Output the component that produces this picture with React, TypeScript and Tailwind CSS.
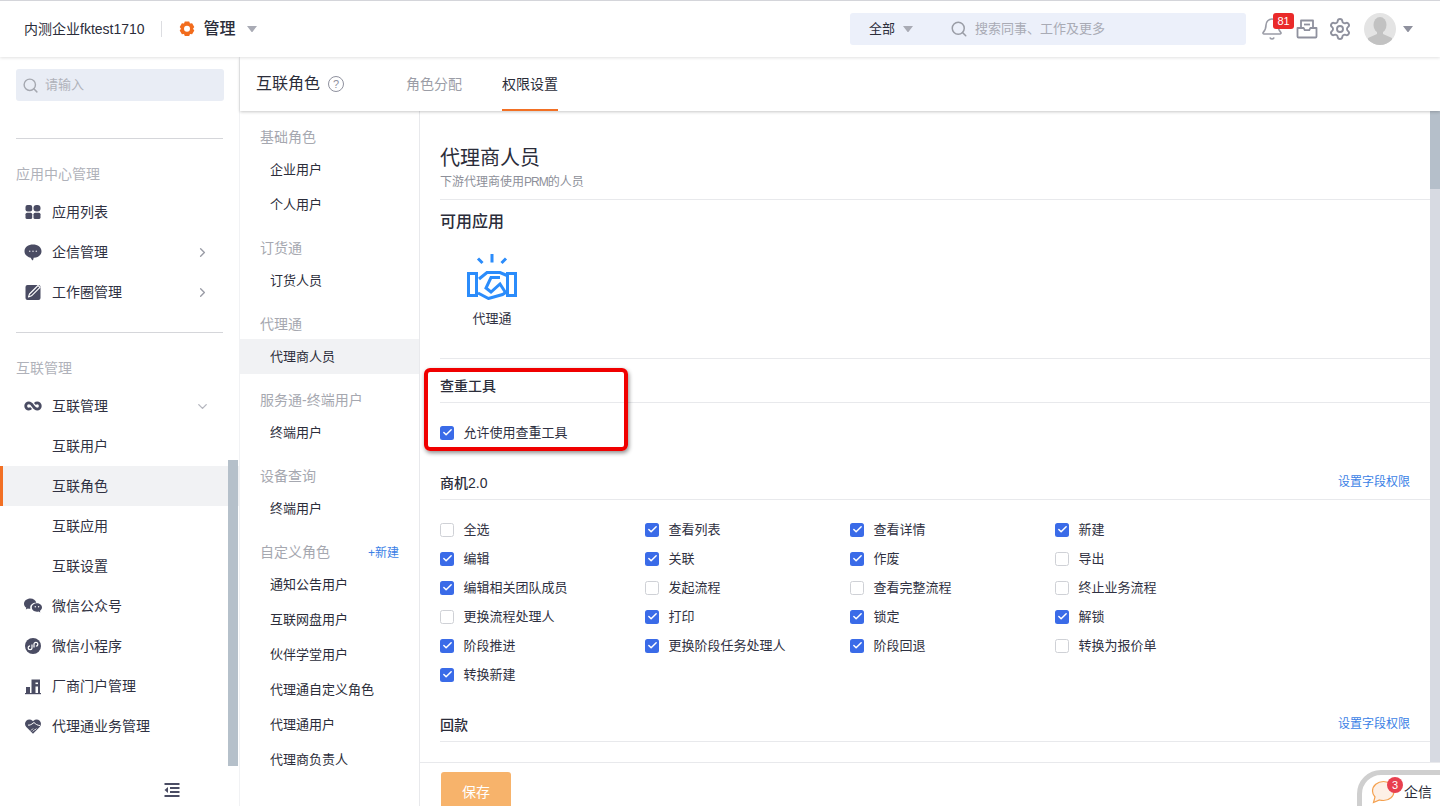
import React from "react";
import { Bell, Settings, Search, ChevronRight, ChevronDown, Check } from "lucide-react";

const Caret = ({ cls = "" }: { cls?: string }) => (
  <svg width="10" height="6" viewBox="0 0 10 6" className={cls}>
    <path d="M0 0h10L5.800 5.400a1 1 0 0 1-1.600 0z" fill="currentColor" />
  </svg>
);

const AppsIcon = () => (
  <svg width="18" height="18" viewBox="0 0 18 18" fill="#4a4c63">
    <rect x="1.500" y="2" width="6.700" height="6.500" rx="2" />
    <rect x="9.500" y="2" width="7" height="6.500" rx="3" />
    <rect x="1.500" y="9.700" width="6.700" height="6.300" rx="1.600" />
    <rect x="9.500" y="9.700" width="7" height="6.300" rx="1.600" />
  </svg>
);
const ChatIcon = () => (
  <svg width="18" height="18" viewBox="0 0 18 18">
    <path d="M9 1.500C4.400 1.500.5 4 .5 8.200c0 3.300 2.500 5.800 6.200 6.500l1.300 2.300c.4.400.9.300 1.100-.1l.6-2.100c4.600-.2 7.800-3 7.800-6.600C17.500 4 13.600 1.500 9 1.500z" fill="#4a4c63" />
    <circle cx="5.700" cy="8.300" r=".8" fill="#d8d9df" />
    <circle cx="9" cy="8.300" r=".8" fill="#d8d9df" />
    <circle cx="12.300" cy="8.300" r=".8" fill="#d8d9df" />
  </svg>
);
const EditIcon = () => (
  <svg width="18" height="18" viewBox="0 0 18 18">
    <rect x="1.500" y="2" width="15" height="15" rx="2" fill="#4a4c63" />
    <path d="M4.500 14l1-3L14 2.500l2 1.800-8.500 8.500z" fill="none" stroke="#fff" strokeWidth="1.100" strokeLinejoin="round" />
  </svg>
);
const LinkIcon = () => (
  <svg width="18" height="18" viewBox="0 0 18 18" fill="none" stroke="#4a4c63" strokeWidth="2.800">
    <path d="M9 9C7.800 7.200 6.500 5.900 4.800 5.900a3.100 3.100 0 0 0 0 6.200c1 0 1.700-.4 2.300-1M9 9c1.200 1.800 2.500 3.100 4.200 3.100a3.100 3.100 0 0 0 0-6.200c-1 0-1.700.4-2.300 1" />
  </svg>
);
const WechatIcon = () => (
  <svg width="20" height="18" viewBox="0 0 20 18">
    <path d="M7.500 1.500C3.800 1.500 1 3.800 1 6.700c0 1.600.9 3 2.300 4L2.800 12.500l2.100-1.100c.7.200 1.300.3 2 .3h.5c-.1-.4-.2-.8-.2-1.200 0-2.600 2.500-4.700 5.700-4.700h.4C12.700 3.300 10.300 1.500 7.500 1.500z" fill="#4a4c63" />
    <path d="M19 10.500c0-2.400-2.400-4.200-5.100-4.200-2.900 0-5.100 1.900-5.100 4.200s2.200 4.200 5.100 4.200c.6 0 1.200-.1 1.700-.3l1.700 1-.4-1.600c1.200-.8 2.100-2 2.100-3.300z" fill="#4a4c63" />
    <circle cx="12.300" cy="9.800" r=".7" fill="#fff" />
    <circle cx="15.600" cy="9.800" r=".7" fill="#fff" />
  </svg>
);
const MiniIcon = () => (
  <svg width="18" height="18" viewBox="0 0 18 18">
    <circle cx="9" cy="9" r="8" fill="#4a4c63" />
    <path d="M8 7.500v3.300a1.900 1.900 0 1 1-1.900-1.900M10 10.500V7.200a1.900 1.900 0 1 1 1.900 1.900" fill="none" stroke="#fff" strokeWidth="1.200" />
  </svg>
);
const BuildingIcon = () => (
  <svg width="18" height="18" viewBox="0 0 18 18" fill="#4a4c63">
    <rect x="2" y="10" width="4" height="6" />
    <path d="M7.500 2.500L16 2.500V16H7.500z" />
    <rect x="11.500" y="5.500" width="2.500" height="1.600" fill="#fff" />
    <rect x="11.500" y="9.500" width="2.500" height="6.500" fill="#fff" />
    <rect x="1" y="16" width="16" height="1.200" />
  </svg>
);
const HeartIcon = () => (
  <svg width="18" height="18" viewBox="0 0 18 18">
    <path d="M9 16.800L2.300 10C.6 8.300.6 5.500 2.300 3.800s4.500-1.700 6.200 0l.5.500.5-.5c1.700-1.700 4.500-1.700 6.200 0s1.700 4.500 0 6.200z" fill="#4a4c63" />
    <path d="M10 5.500C7 8 5 8.500 4 8M10 5.500c1.500 1.500 3.500 3 6 3" fill="none" stroke="#fff" strokeWidth="1" />
    <path d="M7 13.500l2-2M8.800 14.500l2-2M10.800 13l1.500-1.500" stroke="#fff" strokeWidth=".9" />
  </svg>
);
const CollapseIcon = () => (
  <svg width="16" height="14" viewBox="0 0 16 14" fill="#4a4c63">
    <rect x="0.500" y="0" width="15" height="2" />
    <rect x="6" y="4" width="9.500" height="2" />
    <rect x="6" y="8" width="9.500" height="2" />
    <rect x="0.500" y="12" width="15" height="2" />
    <path d="M4 4v6L0.500 7z" />
  </svg>
);
const InboxIcon = () => (
  <svg width="22" height="22" viewBox="0 0 22 22" fill="none" stroke="#8f919e" strokeWidth="1.800" strokeLinejoin="round">
    <path d="M5 10V2.500h12V10" />
    <path d="M1.500 10h6.200l1 2.200h4.600l1-2.200h6.200v8.500a1 1 0 0 1-1 1h-17a1 1 0 0 1-1-1z" />
    <path d="M8 6.500h6" />
  </svg>
);
const Avatar = () => (
  <svg width="32" height="32" viewBox="0 0 32 32">
    <circle cx="16" cy="16" r="16" fill="#e4e4e4" />
    <clipPath id="av"><circle cx="16" cy="16" r="16" /></clipPath>
    <g clipPath="url(#av)" fill="#c2c2c2">
      <ellipse cx="16" cy="12" rx="6.500" ry="8" />
      <path d="M13 18h6v3l9 4v7H4v-7l9-4z" />
    </g>
  </svg>
);
const Handshake = () => (
  <svg width="50" height="46" viewBox="0 0 50 46" fill="none" stroke="#2b8cfb" strokeWidth="3" strokeLinejoin="miter">
    <path d="M25 0v8.500M11 4.500l4.500 4.500M39 4.500l-4.500 4.500" />
    <path d="M1.500 19.500h8v22h-8zM40.500 19.500h8v22h-8z" />
    <path d="M12 25l8-6.500h13l7 3M11 39l10.500 5.500 14-4 4-2.500" />
    <path d="M33 23.500h-9L19 34l5 4 9-8 5.500 8.500" />
  </svg>
);
const FloatBubble = () => (
  <svg width="24" height="24" viewBox="0 0 24 24">
    <path d="M12.500 1.500C6.500 1.500 1.500 5.500 1.500 11c0 2.400 1 4.400 2.500 6L2.500 22.500 8.500 20c1.300.4 2.600.5 4 .5 6 0 10.500-4 10.500-9.500S18.500 1.500 12.500 1.500z" fill="#fdf0e6" stroke="#f4a04e" strokeWidth="1.200" />
  </svg>
);

const NavTitle = ({ t, first }: { t: string; first?: boolean }) => (
  <div className={`mx-4 border-t border-[#d5d6da] h-[54px] pt-[25px] text-[14px] leading-[20px] text-[#b0b2ba] ${first ? "mt-[37px]" : "mt-5"}`}>
    {t}
  </div>
);

const NavItem = ({ icon, t, arrow }: { icon: React.ReactNode; t: string; arrow?: "r" | "d" }) => (
  <div className="h-10 flex items-center pl-6 pr-[30px] text-[14px] text-[#2f3142]">
    <span className="w-5 h-5 flex items-center justify-center -ml-[1px] mr-[9px]">{icon}</span>
    <span className="flex-1">{t}</span>
    {arrow === "r" && <ChevronRight size={15} strokeWidth={2.2} className="text-[#9a9ca6] -mr-[1px]" />}
    {arrow === "d" && <ChevronDown size={15} strokeWidth={2.2} className="text-[#b5b7bf] -mr-[1px]" />}
  </div>
);

const SubItem = ({ t, active }: { t: string; active?: boolean }) => (
  <div className={`h-10 flex items-center text-[14px] text-[#2f3142] ${active ? "bg-[#f1f2f4] border-l-[3px] border-[#f27024] pl-[49px]" : "pl-[52px]"}`}>{t}</div>
);

const Sidebar = () => (
  <aside className="relative w-[240px] shrink-0 border-r border-[#f1f2f4] h-full bg-white overflow-hidden">
    <div className="pt-3 px-4">
      <div className="w-[208px] h-8 rounded-[3px] bg-[#e9edf5] flex items-center px-[6px] gap-[6px]">
        <Search size={17} strokeWidth={2} className="text-[#a5a8b0]" />
        <span className="text-[13px] text-[#b0b2ba]">请输入</span>
      </div>
    </div>
    <NavTitle t="应用中心管理" first />
    <NavItem icon={<AppsIcon />} t="应用列表" />
    <NavItem icon={<ChatIcon />} t="企信管理" arrow="r" />
    <NavItem icon={<EditIcon />} t="工作圈管理" arrow="r" />
    <NavTitle t="互联管理" />
    <NavItem icon={<LinkIcon />} t="互联管理" arrow="d" />
    <SubItem t="互联用户" />
    <SubItem t="互联角色" active />
    <SubItem t="互联应用" />
    <SubItem t="互联设置" />
    <NavItem icon={<WechatIcon />} t="微信公众号" />
    <NavItem icon={<MiniIcon />} t="微信小程序" />
    <NavItem icon={<BuildingIcon />} t="厂商门户管理" />
    <NavItem icon={<HeartIcon />} t="代理通业务管理" />
    <div className="absolute right-[1px] top-[403px] w-[10px] h-[306px] bg-[#b5c0ca]" />
    <div className="absolute left-[164px] top-[726px]"><CollapseIcon /></div>
  </aside>
);

const RoleHead = ({ t, extra }: { t: string; extra?: boolean }) => (
  <div className="h-[29px] flex items-center justify-between pl-5 pr-5 text-[14px] text-[#a6a8b0] mt-3 first:mt-0">
    <span>{t}</span>
    {extra && <span className="text-[12px] text-[#3b7fe6]">+新建</span>}
  </div>
);
const RoleItem = ({ t, active }: { t: string; active?: boolean }) => (
  <div className={`h-[35px] flex items-center pl-[30px] text-[13px] text-[#2b2d3a] ${active ? "bg-[#f1f2f4]" : ""}`}>{t}</div>
);

const RoleList = () => (
  <div className="w-[180px] shrink-0 border-r border-[#e8e9ec] pt-[12px] h-full overflow-hidden">
    <RoleHead t="基础角色" />
    <RoleItem t="企业用户" />
    <RoleItem t="个人用户" />
    <RoleHead t="订货通" />
    <RoleItem t="订货人员" />
    <RoleHead t="代理通" />
    <RoleItem t="代理商人员" active />
    <RoleHead t="服务通-终端用户" />
    <RoleItem t="终端用户" />
    <RoleHead t="设备查询" />
    <RoleItem t="终端用户" />
    <RoleHead t="自定义角色" extra />
    <RoleItem t="通知公告用户" />
    <RoleItem t="互联网盘用户" />
    <RoleItem t="伙伴学堂用户" />
    <RoleItem t="代理通自定义角色" />
    <RoleItem t="代理通用户" />
    <RoleItem t="代理商负责人" />
  </div>
);

const CheckItem = ({ t, on }: { t: string; on?: boolean }) => (
  <div className="h-[29px] flex items-center text-[13px] text-[#2f3142]">
    <span className={`w-[14px] h-[14px] rounded-[2.500px] flex items-center justify-center mr-[9.500px] ${on ? "bg-[#3a6be8]" : "border border-[#cfd1d6] bg-white"}`}>
      {on && <Check size={11} strokeWidth={3.2} className="text-white" />}
    </span>
    {t}
  </div>
);

const perms: [string, boolean][] = [
  ["全选", false], ["查看列表", true], ["查看详情", true], ["新建", true],
  ["编辑", true], ["关联", true], ["作废", true], ["导出", false],
  ["编辑相关团队成员", true], ["发起流程", false], ["查看完整流程", false], ["终止业务流程", false],
  ["更换流程处理人", false], ["打印", true], ["锁定", true], ["解锁", true],
  ["阶段推进", true], ["更换阶段任务处理人", true], ["阶段回退", true], ["转换为报价单", false],
  ["转换新建", true],
];

const Main = () => (
  <div className="relative flex-1 h-full flex flex-col min-w-0">
    <div className="flex-1 min-h-0 overflow-hidden pl-5 pr-[10px]">
      <div className="pt-[35px] text-[20px] leading-[24px] font-normal text-[#2b2d3a] h-[57px]">代理商人员</div>
      <div className="text-[12px] leading-[18px] text-[#8d8f99] h-[32px] border-b border-[#e8e9ec] pt-[5px]">
        下游代理商使用<span className="tracking-[-1px]">PRM</span>的人员
      </div>
      <div className="text-[16px] leading-[22px] font-medium text-[#2b2d3a] pt-[11px] h-[44px]">可用应用</div>
      <div className="w-[104px] flex flex-col items-center h-[114px]">
        <div className="pt-[10px] flex"><Handshake /></div>
        <div className="text-[13px] leading-[18px] text-[#2f3142] mt-[10px]">代理通</div>
      </div>
      <div className="border-t border-[#e8e9ec]" />
      <div className="h-[44px] border-b border-[#e8e9ec] pt-[17px] text-[14px] leading-[20px] font-medium text-[#2b2d3a]">查重工具</div>
      <div className="h-[58px] pt-[15px]"><CheckItem t="允许使用查重工具" on /></div>
      <div className="h-[39px] flex justify-between items-start border-b border-[#e8e9ec] pt-[12px] text-[14px] leading-[20px] font-medium text-[#2b2d3a]">
        <span>商机2.0</span>
        <span className="text-[12px] font-normal text-[#3b7fe6] -mt-[1px] mr-5">设置字段权限</span>
      </div>
      <div className="grid grid-cols-[205px_205px_205px_205px] pt-[15px]">
        {perms.map(([t, on], i) => <CheckItem key={i} t={t} on={on} />)}
      </div>
      <div className="h-[53px] flex justify-between items-start border-b border-[#e8e9ec] pt-[26px] text-[14px] leading-[20px] font-medium text-[#2b2d3a]">
        <span>回款</span>
        <span className="text-[12px] font-normal text-[#3b7fe6] -mt-[1px] mr-5">设置字段权限</span>
      </div>
    </div>
    <div className="h-[44px] shrink-0 border-t border-[#e8e9ec] pl-[21px] pt-[9px] overflow-hidden bg-white">
      <div className="w-[70px] h-[40px] rounded-[3px] bg-[#f7b36b] text-white text-[14px] flex items-center justify-center">保存</div>
    </div>
    <div className="absolute right-0 top-0 w-[10px] h-[651px] bg-[#d7dae2]">
      <div className="w-full h-[78px] bg-[#b5bfca]" />
    </div>
    <div className="absolute left-[4px] top-[257px] w-[204px] h-[83px] border-4 border-[#f00000] rounded-[6px] shadow-[1px_2px_4px_rgba(0,0,0,0.45)] pointer-events-none" />
    <div className="absolute left-[937px] top-[659px] w-[100px] h-[60px] rounded-l-[24px] border-[5px] border-[#cfcfcf] bg-white flex items-start pl-[9px] pt-[5px]">
      <div className="relative w-[24px] h-[24px]">
        <FloatBubble />
        <span className="absolute -top-[3px] left-[16px] w-[16px] h-[16px] rounded-full bg-[#e8404f] text-white text-[11px] leading-[16px] text-center">3</span>
      </div>
      <span className="ml-[9px] text-[14px] leading-[24px] text-[#2b2d3a]">企信</span>
    </div>
  </div>
);

export default function App() {
  return (
    <div className="w-[1440px] h-[806px] overflow-hidden flex flex-col bg-white font-['Liberation_Sans','Noto_Sans_CJK_SC',sans-serif]">
      <header className="relative z-20 h-[57px] shrink-0 border-t-[1px] border-[#d4d5da] bg-white shadow-[0_1px_3px_rgba(0,0,0,0.12)] flex items-center">
        <span className="ml-6 text-[14px] text-[#2b2d3a]">内测企业fktest1710</span>
        <span className="mx-4 w-px h-4 bg-[#dcdde1]" />
        <svg width="18" height="18" viewBox="0 0 18 18">
          <path d="M6.800 1.500h4.400l.8 2 2.100-.3 2.200 3.800-1.300 1.700 1.300 1.700-2.200 3.800-2.100-.3-.8 2H6.800l-.8-2-2.100.3-2.200-3.800L3 8.700 1.700 7l2.200-3.800 2.100.3z" fill="#f26c1d" />
          <circle cx="9" cy="8.700" r="3" fill="#fff" />
        </svg>
        <span className="ml-[8px] text-[16px] font-medium text-[#2b2d3a]">管理</span>
        <Caret cls="ml-[11px] text-[#a9abb5]" />
        <div className="ml-auto flex items-center">
          <div className="w-[396px] h-8 rounded-[3px] bg-[#ecf0fa] flex items-center">
            <span className="ml-[19px] text-[13px] text-[#2b2d3a]">全部</span>
            <Caret cls="ml-[8px] text-[#a9abb5]" />
            <Search size={18} strokeWidth={2} className="ml-[37px] text-[#9a9da6]" />
            <span className="ml-[7px] text-[13px] text-[#a9abb5]">搜索同事、工作及更多</span>
          </div>
          <div className="relative ml-[14px] w-[24px] h-[24px]">
            <Bell size={24} strokeWidth={1.6} className="text-[#9a9ca6]" />
            <span className="absolute -top-[4px] left-[13px] w-[21px] h-[16px] rounded-[3px] bg-[#ea2a2a] text-white text-[11px] leading-[16px] text-center">81</span>
          </div>
          <span className="ml-[12px] flex"><InboxIcon /></span>
          <Settings size={24} strokeWidth={1.9} className="ml-[10px] text-[#8f919e]" />
          <span className="ml-[12px] flex"><Avatar /></span>
          <Caret cls="ml-[7px] mr-[27px] text-[#8f919e]" />
        </div>
      </header>
      <div className="flex-1 min-h-0 flex">
        <Sidebar />
        <div className="flex-1 min-w-0 flex flex-col">
          <div className="relative z-10 h-[54px] shrink-0 shadow-[0_1px_3px_rgba(0,0,0,0.22)] bg-white flex items-stretch pl-4">
            <div className="flex items-center text-[16px] text-[#2b2d3a]">
              互联角色
              <span className="ml-2 w-4 h-4 rounded-full border border-[#8f919e] text-[#8f919e] text-[11px] flex items-center justify-center">?</span>
            </div>
            <div className="ml-[62px] flex items-center text-[14px] text-[#9b9da6]">角色分配</div>
            <div className="ml-[40px] flex items-center text-[14px] text-[#2b2d3a] border-b-2 border-[#f27024] pt-[2px]">权限设置</div>
          </div>
          <div className="flex-1 min-h-0 flex">
            <RoleList />
            <Main />
          </div>
        </div>
      </div>
    </div>
  );
}
